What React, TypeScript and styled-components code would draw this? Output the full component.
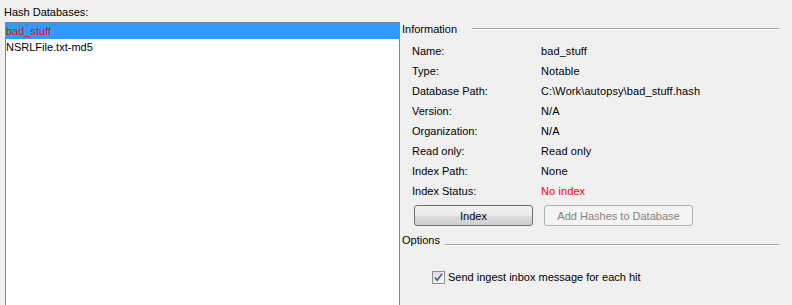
import styled, { createGlobalStyle } from 'styled-components'

const GlobalStyle = createGlobalStyle`
  html, body {
    margin: 0;
    padding: 0;
    background: #f0f0f0;
    font-family: "Liberation Sans", Arial, sans-serif;
    font-size: 11px;
    color: #000;
  }
`

const info: { label: string, value: string, warn?: boolean }[] = [
  { label: 'Name:', value: 'bad_stuff' },
  { label: 'Type:', value: 'Notable' },
  { label: 'Database Path:', value: 'C:\\Work\\autopsy\\bad_stuff.hash' },
  { label: 'Version:', value: 'N/A' },
  { label: 'Organization:', value: 'N/A' },
  { label: 'Read only:', value: 'Read only' },
  { label: 'Index Path:', value: 'None' },
  { label: 'Index Status:', value: 'No index', warn: true },
]

const databases = ['bad_stuff', 'NSRLFile.txt-md5']

const App = () => {
  return (
    <Page>
      <GlobalStyle />
      <Title>Hash Databases:</Title>
      <Body>
        <List>
          {databases.map((name, i) => (
            <ListRow key={name} $selected={i === 0}>{name}</ListRow>
          ))}
        </List>
        <Panel>
          <SectionHeader $gap={15}>
            <span>Information</span>
            <Rule />
          </SectionHeader>
          <InfoGrid>
            {info.map(({ label, value, warn }) => (
              <InfoRow key={label}>
                <Label>{label}</Label>
                <Value $warn={warn}>{value}</Value>
              </InfoRow>
            ))}
          </InfoGrid>
          <Buttons>
            <Button $width={119}>Index</Button>
            <Button $width={149} disabled>Add Hashes to Database</Button>
          </Buttons>
          <SectionHeader $gap={5}>
            <span>Options</span>
            <Rule $offset={5} />
          </SectionHeader>
          <CheckRow>
            <CheckBox>
              <svg width="11" height="11" viewBox="0 0 11 11">
                <path d="M2 5.5 L4.3 8.2 L9 1.8" fill="none" stroke="#4a5b9a" strokeWidth="1.7" />
              </svg>
            </CheckBox>
            <span>Send ingest inbox message for each hit</span>
          </CheckRow>
        </Panel>
      </Body>
    </Page>
  )
}

const Page = styled.div`
  width: 792px;
  height: 305px;
  overflow: hidden;
`

const Title = styled.div`
  padding: 5px 0 3px 4px;
  line-height: 14px;
`

const Body = styled.div`
  display: flex;
  height: 283px;
`

const List = styled.div`
  margin-left: 5px;
  width: 393px;
  height: 300px;
  background: #fff;
  border: 1px solid #828790;
  border-bottom: none;
`

const ListRow = styled.div<{ $selected?: boolean }>`
  height: 16px;
  line-height: 16px;
  background: ${({ $selected }) => ($selected ? '#3399ff' : 'transparent')};
  color: ${({ $selected }) => ($selected ? '#ff0000' : '#000')};
`

const Panel = styled.div`
  flex: 1;
  display: flex;
  flex-direction: column;
  padding: 0 13px 0 2px;
`

const SectionHeader = styled.div<{ $gap: number }>`
  display: flex;
  align-items: center;
  gap: ${({ $gap }) => $gap}px;
  height: 14px;
  line-height: 14px;
`

const Rule = styled.div<{ $offset?: number }>`
  flex: 1;
  height: 1px;
  background: #a0a0a0;
  border-bottom: 1px solid #fff;
  margin-top: ${({ $offset }) => ($offset || 0) * 2}px;
`

const InfoGrid = styled.div`
  display: flex;
  flex-direction: column;
  margin-top: 5px;
  padding-left: 10px;
`

const InfoRow = styled.div`
  display: flex;
  height: 20px;
  line-height: 20px;
`

const Label = styled.div`
  width: 129px;
`

const Value = styled.div<{ $warn?: boolean }>`
  color: ${({ $warn }) => ($warn ? '#ff0000' : '#000')};
  letter-spacing: 0.1px;
`

const Buttons = styled.div`
  display: flex;
  gap: 11px;
  margin: 4px 0 7px 12px;
`

const Button = styled.button<{ $width: number }>`
  width: ${({ $width }) => $width}px;
  height: 21px;
  padding: 0;
  font: inherit;
  color: #000;
  border: 1px solid #707070;
  border-radius: 3px;
  background: linear-gradient(#f2f2f2 0%, #ebebeb 50%, #dddddd 51%, #cfcfcf 100%);

  &:disabled {
    color: #838383;
    border-color: #adb2b5;
    background: #f4f4f4;
  }
`

const CheckRow = styled.div`
  display: flex;
  align-items: center;
  gap: 3px;
  margin: 23px 0 0 30px;
  line-height: 14px;
`

const CheckBox = styled.div`
  box-sizing: border-box;
  width: 13px;
  height: 13px;
  border: 1px solid #8f8f8f;
  background: linear-gradient(135deg, #dcdcdc, #fbfbfb);
  display: flex;
  align-items: center;
  justify-content: center;
`

export default App
